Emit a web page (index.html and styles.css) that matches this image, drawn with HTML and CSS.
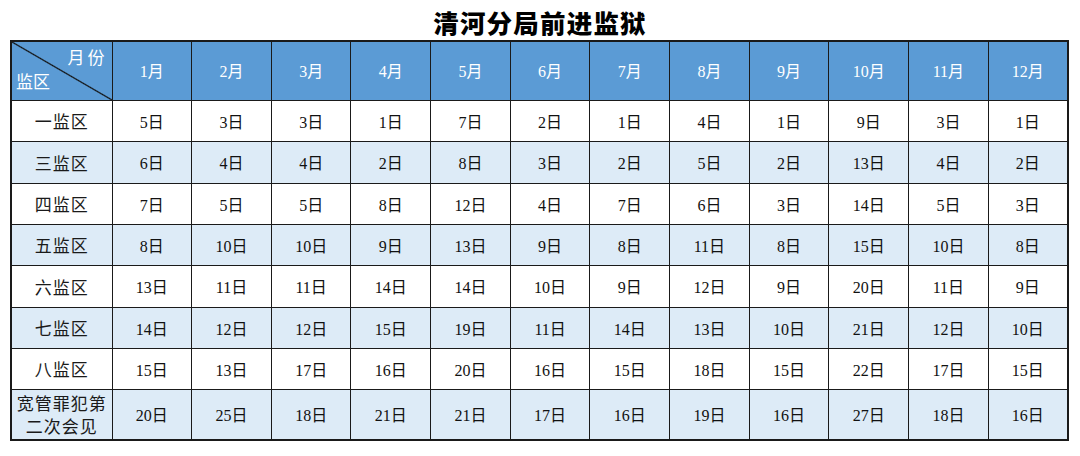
FILE: index.html
```html
<!DOCTYPE html>
<html lang="zh">
<head>
<meta charset="utf-8">
<title>清河分局前进监狱</title>
<link rel="stylesheet" href="styles.css">
</head>
<body>
<h1 class="title">清河分局前进监狱</h1>
<table class="sched">
  <colgroup><col class="c-label"><col span="12"></colgroup>
  <thead>
    <tr class="head">
      <th class="corner"><div class="corner-in"><span class="c-top">月份</span><span class="c-bot">监区</span></div></th>
      <th>1月</th><th>2月</th><th>3月</th><th>4月</th><th>5月</th><th>6月</th><th>7月</th><th>8月</th><th>9月</th><th>10月</th><th>11月</th><th>12月</th>
    </tr>
  </thead>
  <tbody>
    <tr class="r1"><td class="lbl">一监区</td><td>5日</td><td>3日</td><td>3日</td><td>1日</td><td>7日</td><td>2日</td><td>1日</td><td>4日</td><td>1日</td><td>9日</td><td>3日</td><td>1日</td></tr>
    <tr class="r2 alt"><td class="lbl">三监区</td><td>6日</td><td>4日</td><td>4日</td><td>2日</td><td>8日</td><td>3日</td><td>2日</td><td>5日</td><td>2日</td><td>13日</td><td>4日</td><td>2日</td></tr>
    <tr class="r1"><td class="lbl">四监区</td><td>7日</td><td>5日</td><td>5日</td><td>8日</td><td>12日</td><td>4日</td><td>7日</td><td>6日</td><td>3日</td><td>14日</td><td>5日</td><td>3日</td></tr>
    <tr class="r1 alt"><td class="lbl">五监区</td><td>8日</td><td>10日</td><td>10日</td><td>9日</td><td>13日</td><td>9日</td><td>8日</td><td>11日</td><td>8日</td><td>15日</td><td>10日</td><td>8日</td></tr>
    <tr class="r2"><td class="lbl">六监区</td><td>13日</td><td>11日</td><td>11日</td><td>14日</td><td>14日</td><td>10日</td><td>9日</td><td>12日</td><td>9日</td><td>20日</td><td>11日</td><td>9日</td></tr>
    <tr class="r1 alt"><td class="lbl">七监区</td><td>14日</td><td>12日</td><td>12日</td><td>15日</td><td>19日</td><td>11日</td><td>14日</td><td>13日</td><td>10日</td><td>21日</td><td>12日</td><td>10日</td></tr>
    <tr class="r1"><td class="lbl">八监区</td><td>15日</td><td>13日</td><td>17日</td><td>16日</td><td>20日</td><td>16日</td><td>15日</td><td>18日</td><td>15日</td><td>22日</td><td>17日</td><td>15日</td></tr>
    <tr class="rlast alt"><td class="lbl two">宽管罪犯第<br>二次会见</td><td>20日</td><td>25日</td><td>18日</td><td>21日</td><td>21日</td><td>17日</td><td>16日</td><td>19日</td><td>16日</td><td>27日</td><td>18日</td><td>16日</td></tr>
  </tbody>
</table>
</body>
</html>
```
FILE: styles.css
```css
html, body {
  margin: 0;
  padding: 0;
  background: #ffffff;
}
body {
  font-family: "Liberation Serif", "Noto Sans CJK SC", serif;
  color: #111;
}
.title {
  margin: 0;
  height: 40px;
  line-height: 44px;
  text-align: center;
  font-family: "Noto Sans CJK SC", sans-serif;
  font-weight: 900;
  font-size: 25.5px;
  letter-spacing: 1.2px;
  color: #000;
}
.sched {
  margin-left: 10px;
  width: 1059px;
  table-layout: fixed;
  border-collapse: collapse;
  border: 2px solid #1a1a1a;
}
.c-label { width: 101px; }
.sched th, .sched td {
  border: 1px solid #1a1a1a;
  text-align: center;
  vertical-align: middle;
  padding: 0;
  font-size: 16px;
}
.sched td.lbl {
  font-family: "Noto Sans CJK SC", sans-serif;
  font-size: 17px;
  letter-spacing: 1px;
  color: #1a1a1a;
}
.sched td.two {
  line-height: 23px;
  letter-spacing: 1px;
}
.head {
  height: 59px;
  background: #5b9bd5;
}
.head th {
  color: #ffffff;
  font-weight: normal;
  font-size: 16px;
  padding-bottom: 2px;
}
.corner {
  background: linear-gradient(to top right, transparent calc(50% - 1.2px), #111 50%, transparent calc(50% + 1.2px));
}
.corner-in {
  display: flex;
  flex-direction: column;
  padding: 3px 6px 4px 4px;
  font-family: "Noto Sans CJK SC", sans-serif;
  font-size: 17px;
  line-height: 22px;
}
.c-top {
  align-self: flex-end;
  letter-spacing: 3px;
  margin-right: -2px;
}
.c-bot {
  align-self: flex-start;
  margin-top: 2px;
}
.r1 { height: 41px; }
.r2 { height: 42px; }
.rlast { height: 51px; }
.alt { background: #ddebf7; }
```
